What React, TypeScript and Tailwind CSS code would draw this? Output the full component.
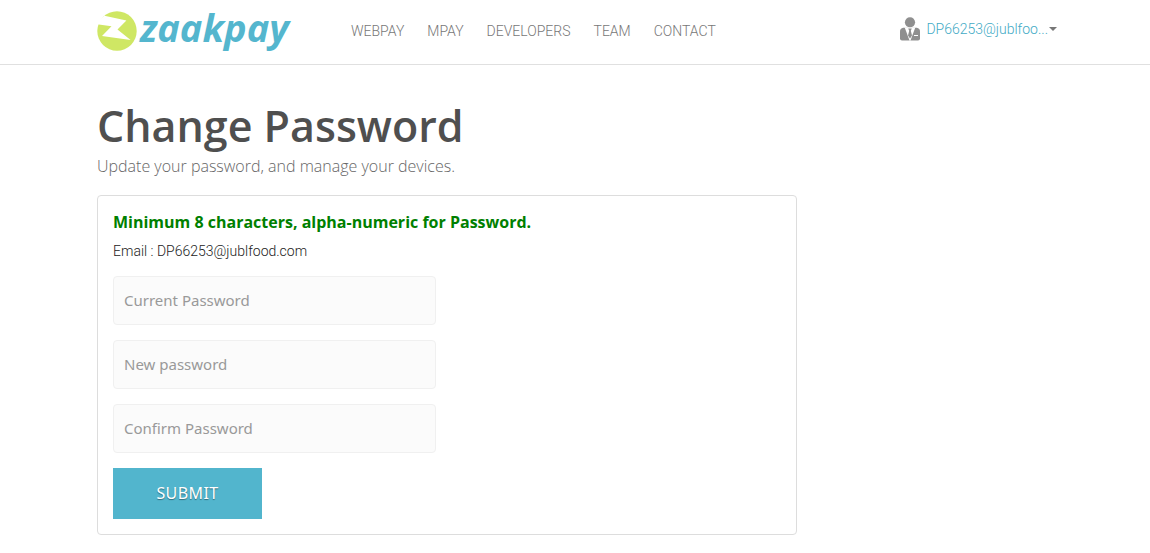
const navItems = ["WEBPAY", "MPAY", "DEVELOPERS", "TEAM", "CONTACT"];

const fields = [
  { id: "current-password", label: "Current Password" },
  { id: "new-password", label: "New password" },
  { id: "confirm-password", label: "Confirm Password" },
];

function LogoMark() {
  return (
    <svg viewBox="0 0 40 40" className="size-10 shrink-0" aria-hidden="true">
      <circle cx="20" cy="20" r="19.7" fill="#cfe764" />
      <path d="M7.5 4.7 L29.4 9.4 L20.5 18.6 L33.6 29 L5 25 L14.5 15.3 L0 13.2 C1.7 9.5 4.2 6.7 7.5 4.7 Z" fill="#fff" />
    </svg>
  );
}

function UserIcon() {
  return (
    <svg viewBox="0 0 20 24" className="h-6 w-5 shrink-0" aria-hidden="true">
      <circle cx="10" cy="5.3" r="5.1" fill="#8f8f8f" />
      <path d="M3.2 10.8 H16.8 Q20 11.2 20 14.5 V21.5 Q20 23.5 18 23.5 H2 Q0 23.5 0 21.5 V14.5 Q0 11.2 3.2 10.8 Z" fill="#8f8f8f" />
      <path d="M4.7 10.5 L9.6 23.8 H10.4 L15.3 10.5 Z" fill="#fff" />
      <path d="M8.2 11.6 H11.8 L10.8 13.8 L12 18.5 L10 21.5 L8 18.5 L9.2 13.8 Z" fill="#8f8f8f" />
      <path d="M14 18.5 H18" stroke="#fff" strokeWidth="1" />
    </svg>
  );
}

export default function App() {
  return (
    <div className="bg-white font-['Open_Sans',sans-serif] text-[#4f4f4f]">
      <header className="border-b border-[#e0e0e0]">
        <div className="mx-auto flex h-16 max-w-[960px] items-center pl-0.5">
          <a href="#home" className="flex w-[254px] shrink-0 items-center gap-[3px] pb-0.5" aria-label="zaakpay home">
            <LogoMark />
            <span className="pb-2 text-[38px] leading-10 font-bold text-[#54b6ce] italic">zaakpay</span>
          </a>
          <nav className="flex gap-[23px] pb-0.5 font-['Roboto',sans-serif] text-sm leading-5 font-light text-[#777]">
            {navItems.map((item) => (
              <a key={item} href={"#" + item.toLowerCase()}>{item}</a>
            ))}
          </nav>
          <button type="button" className="-mr-0.5 ml-auto flex items-center gap-1.5 pb-1.5 text-sm text-[#42aac5]">
            <UserIcon />
            <span className="flex items-center gap-px font-['Roboto',sans-serif] font-light">
              DP66253@jublfoo...
              <svg viewBox="0 0 8 4" className="h-1 w-2" aria-hidden="true">
                <path d="M0 0 H8 L4 4 Z" fill="#777" />
              </svg>
            </span>
          </button>
        </div>
      </header>
      <main className="mx-auto max-w-[960px] pt-[35px] pb-[18px] pl-0.5">
        <h1 className="text-[43px] leading-[52px] font-semibold text-[#4f4f4f]">Change Password</h1>
        <p className="pt-0.5 text-base leading-6 font-light text-[#666]">Update your password, and manage your devices.</p>
        <section className="mt-[17px] max-w-[700px] rounded border border-[#ddd] px-[15px] pt-3.5 pb-[15px]">
          <h2 className="text-base leading-6 font-bold text-[#008000]">Minimum 8 characters, alpha-numeric for Password.</h2>
          <p className="mt-[7px] font-['Roboto',sans-serif] text-sm leading-5 font-light text-[#222]">Email : DP66253@jublfood.com</p>
          <form className="mt-[15px] flex flex-col items-start gap-[15px]" onSubmit={(e) => e.preventDefault()}>
            {fields.map((field) => (
              <input
                key={field.id}
                id={field.id}
                type="password"
                aria-label={field.label}
                placeholder={field.label}
                className="h-[49px] w-full max-w-[323px] rounded border border-[#f0f0f0] bg-[#fbfbfb] px-2.5 pb-0.5 font-['Noto_Sans',sans-serif] text-[15px] placeholder:text-[#999]"
              />
            ))}
            <button type="submit" className="h-[51px] w-[149px] bg-[#52b5cd] pb-0.5 font-['Noto_Sans',sans-serif] text-base tracking-wide text-white text-shadow-[0_1px_1px_rgba(0,0,0,0.4)]">
              SUBMIT
            </button>
          </form>
        </section>
      </main>
    </div>
  );
}
